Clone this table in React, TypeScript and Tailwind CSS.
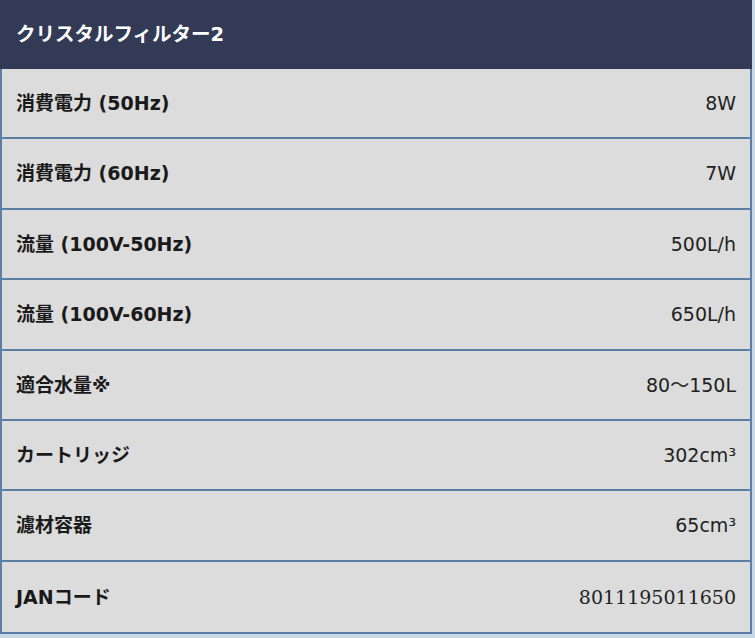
import React from 'react';

const rows: { label: string; value: string; serif?: boolean }[] = [
  { label: '消費電力 (50Hz)', value: '8W' },
  { label: '消費電力 (60Hz)', value: '7W' },
  { label: '流量 (100V-50Hz)', value: '500L/h' },
  { label: '流量 (100V-60Hz)', value: '650L/h' },
  { label: '適合水量※', value: '80～150L' },
  { label: 'カートリッジ', value: '302cm³' },
  { label: '濾材容器', value: '65cm³' },
  { label: 'JANコード', value: '8011195011650', serif: true },
];

const App: React.FC = () => {
  return (
    <div className="w-[755px] h-[638px] bg-[#c9d8e6] font-['DejaVu_Sans','Noto_Sans_CJK_JP',sans-serif]">
      <div className="w-[752px] border-x-2 border-b-2 border-[#5a7ea5]">
        <div className="h-[69px] bg-[#333a56] flex items-center -mx-[2px] pl-[16px]">
          <span className="text-white font-bold text-[19.5px]">クリスタルフィルター2</span>
        </div>
        {rows.map((r, i) => (
          <div
            key={r.label}
            className={`h-[70.4px] box-border bg-[#dcdcdc] flex items-center justify-between pl-[14px] pr-[14px] ${
              i === rows.length - 1 ? '' : 'border-b-2 border-[#5a7ea5]'
            }`}
          >
            <span className="font-bold text-[19px] text-[#1a1a1a]">{r.label}</span>
            <span
              className={`text-[#222] text-[19px] ${r.serif ? "font-['DejaVu_Serif',serif]" : ''}`}
            >
              {r.value}
            </span>
          </div>
        ))}
      </div>
    </div>
  );
};

export default App;
